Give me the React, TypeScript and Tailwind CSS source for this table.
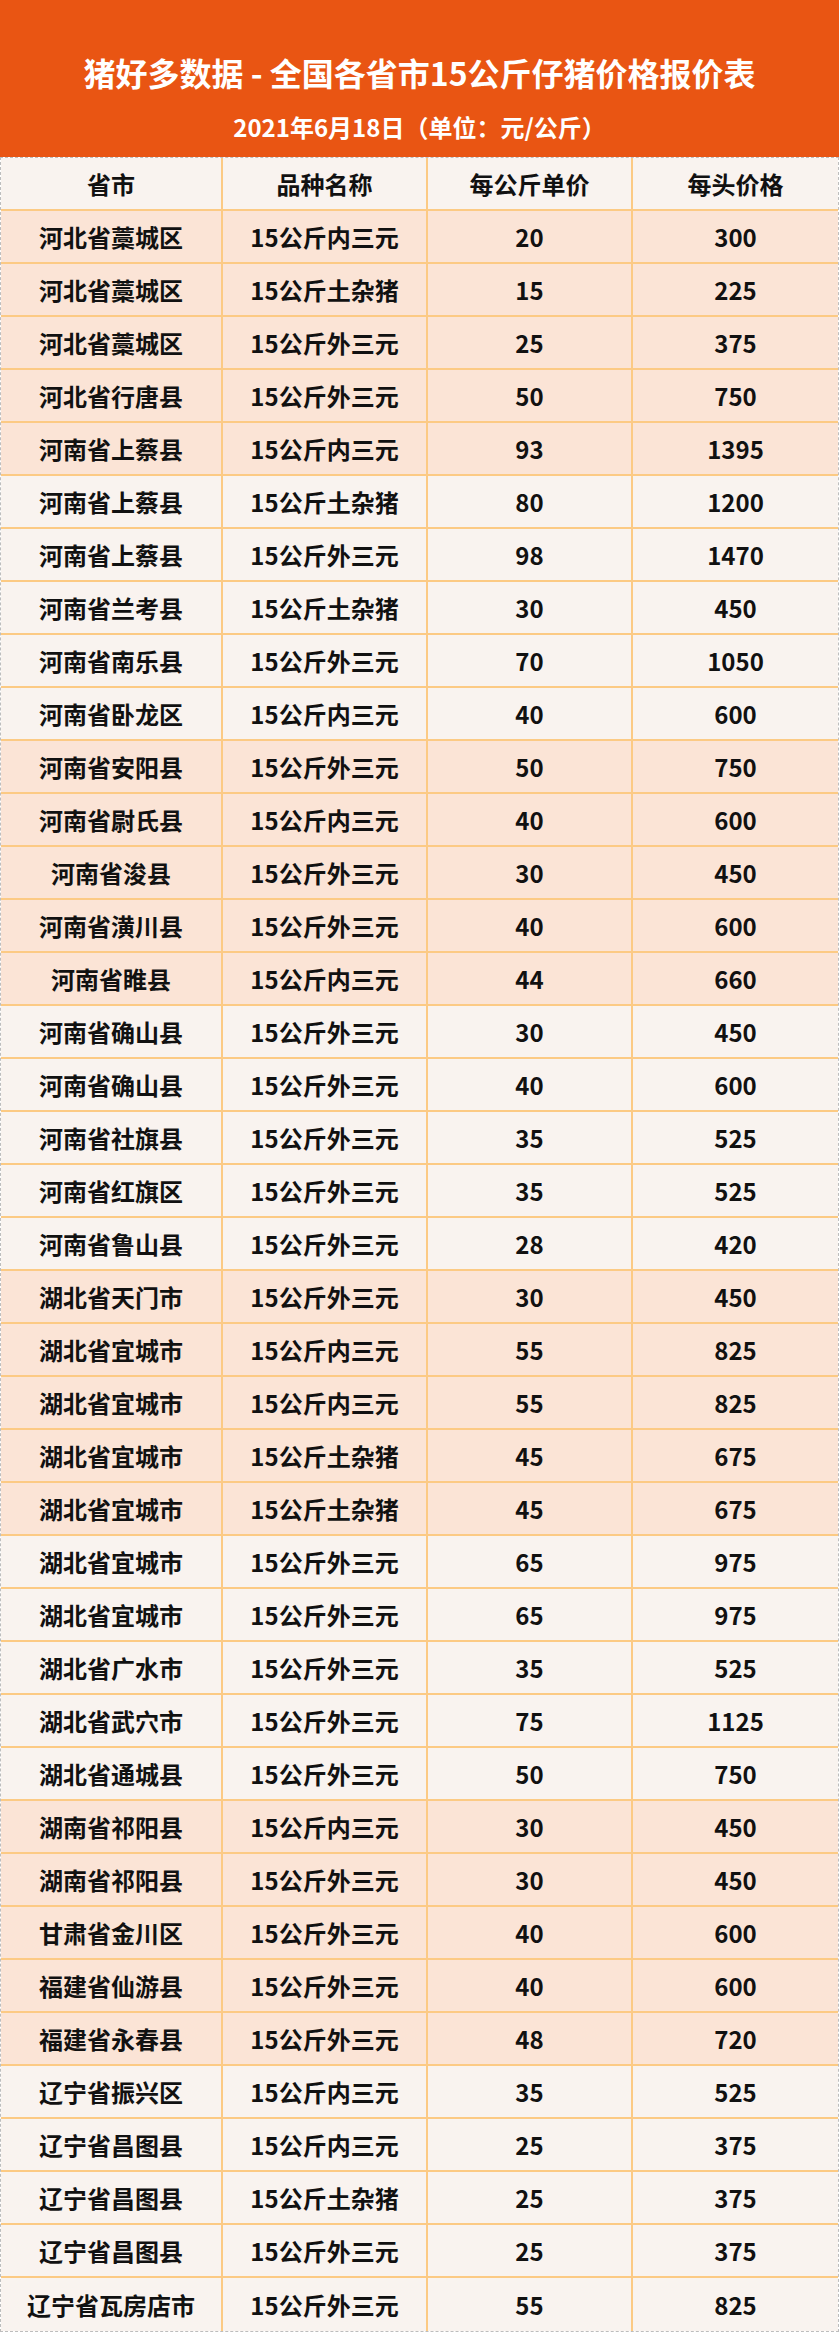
const rows: [string, string, string, string][] = [
  ["河北省藁城区", "15公斤内三元", "20", "300"],
  ["河北省藁城区", "15公斤土杂猪", "15", "225"],
  ["河北省藁城区", "15公斤外三元", "25", "375"],
  ["河北省行唐县", "15公斤外三元", "50", "750"],
  ["河南省上蔡县", "15公斤内三元", "93", "1395"],
  ["河南省上蔡县", "15公斤土杂猪", "80", "1200"],
  ["河南省上蔡县", "15公斤外三元", "98", "1470"],
  ["河南省兰考县", "15公斤土杂猪", "30", "450"],
  ["河南省南乐县", "15公斤外三元", "70", "1050"],
  ["河南省卧龙区", "15公斤内三元", "40", "600"],
  ["河南省安阳县", "15公斤外三元", "50", "750"],
  ["河南省尉氏县", "15公斤内三元", "40", "600"],
  ["河南省浚县", "15公斤外三元", "30", "450"],
  ["河南省潢川县", "15公斤外三元", "40", "600"],
  ["河南省睢县", "15公斤内三元", "44", "660"],
  ["河南省确山县", "15公斤外三元", "30", "450"],
  ["河南省确山县", "15公斤外三元", "40", "600"],
  ["河南省社旗县", "15公斤外三元", "35", "525"],
  ["河南省红旗区", "15公斤外三元", "35", "525"],
  ["河南省鲁山县", "15公斤外三元", "28", "420"],
  ["湖北省天门市", "15公斤外三元", "30", "450"],
  ["湖北省宜城市", "15公斤内三元", "55", "825"],
  ["湖北省宜城市", "15公斤内三元", "55", "825"],
  ["湖北省宜城市", "15公斤土杂猪", "45", "675"],
  ["湖北省宜城市", "15公斤土杂猪", "45", "675"],
  ["湖北省宜城市", "15公斤外三元", "65", "975"],
  ["湖北省宜城市", "15公斤外三元", "65", "975"],
  ["湖北省广水市", "15公斤外三元", "35", "525"],
  ["湖北省武穴市", "15公斤外三元", "75", "1125"],
  ["湖北省通城县", "15公斤外三元", "50", "750"],
  ["湖南省祁阳县", "15公斤内三元", "30", "450"],
  ["湖南省祁阳县", "15公斤外三元", "30", "450"],
  ["甘肃省金川区", "15公斤外三元", "40", "600"],
  ["福建省仙游县", "15公斤外三元", "40", "600"],
  ["福建省永春县", "15公斤外三元", "48", "720"],
  ["辽宁省振兴区", "15公斤内三元", "35", "525"],
  ["辽宁省昌图县", "15公斤内三元", "25", "375"],
  ["辽宁省昌图县", "15公斤土杂猪", "25", "375"],
  ["辽宁省昌图县", "15公斤外三元", "25", "375"],
  ["辽宁省瓦房店市", "15公斤外三元", "55", "825"],
];

function Row({ cells, bg, last }: { cells: string[]; bg: string; last?: boolean }) {
  return (
    <div
      className={`grid h-[53px] grid-cols-[222px_205px_205px_1fr] ${bg} ${
        last ? "" : "border-b-2 border-[#fcca84]"
      }`}
    >
      {cells.map((c, i) => (
        <div
          key={i}
          className={`flex items-center justify-center text-[24px] font-bold text-[#111] ${
            i < 3 ? "border-r-2 border-[#fcca84]" : ""
          }`}
        >
          {c}
        </div>
      ))}
    </div>
  );
}

export default function App() {
  return (
    <div className="w-[839px] bg-white font-['Noto_Sans_CJK_SC','Noto_Sans',sans-serif]">
      {/* 标题 */}
      <div className="flex h-[157px] flex-col items-center bg-[#e95513] pt-[52px] text-white">
        <h1 className="text-[32px] font-bold leading-[40px]">
          猪好多数据 - 全国各省市15公斤仔猪价格报价表
        </h1>
        <p className="mt-[19px] text-[24px] font-bold leading-[32px]">
          2021年6月18日（单位：元/公斤）
        </p>
      </div>

      {/* 表格 */}
      <div className="border border-dashed border-[#bdbdbd]">
        <Row cells={["省市", "品种名称", "每公斤单价", "每头价格"]} bg="bg-[#f9f3ef]" />
        {rows.map((r, i) => (
          <Row
            key={i}
            cells={r}
            bg={Math.floor(i / 5) % 2 === 0 ? "bg-[#fbe4d6]" : "bg-[#f9f3ef]"}
            last={i === rows.length - 1}
          />
        ))}
      </div>
    </div>
  );
}
